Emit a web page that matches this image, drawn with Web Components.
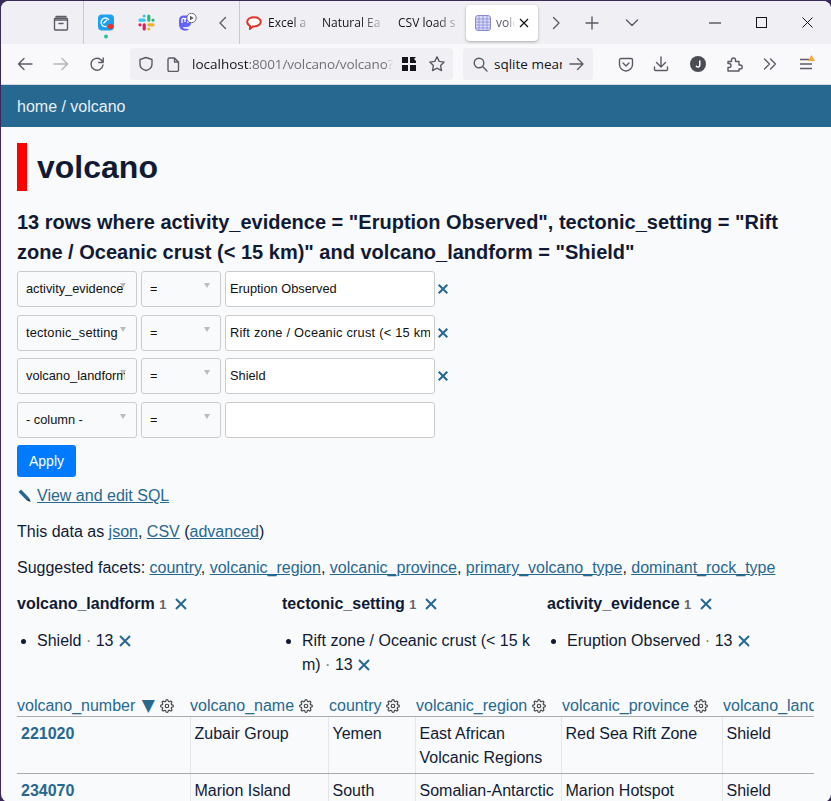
<!DOCTYPE html>
<html lang="en">
<head>
<meta charset="utf-8">
<title>volcano</title>
<style>
  html, body { margin: 0; height: 100%; overflow: hidden; background: #3a2a5c; }
  app-window { height: 801px; }
</style>
</head>
<body>
<app-window>
  <browser-chrome></browser-chrome>
  <site-header>home / volcano</site-header>
  <table-page></table-page>
</app-window>

<script>
const X_PATH = "M2 2l10 10M12 2L2 12";
const GEAR = `<svg width="14" height="14" viewBox="0 0 24 24" fill="none" stroke="#444" stroke-width="2" stroke-linecap="round" stroke-linejoin="round"><circle cx="12" cy="12" r="3"/><path d="M19.4 15a1.65 1.65 0 0 0 .33 1.82l.06.06a2 2 0 0 1 0 2.83 2 2 0 0 1-2.83 0l-.06-.06a1.65 1.65 0 0 0-1.82-.33 1.65 1.65 0 0 0-1 1.51V21a2 2 0 0 1-2 2 2 2 0 0 1-2-2v-.09A1.65 1.65 0 0 0 9 19.4a1.65 1.65 0 0 0-1.82.33l-.06.06a2 2 0 0 1-2.83 0 2 2 0 0 1 0-2.83l.06-.06a1.65 1.65 0 0 0 .33-1.82 1.65 1.65 0 0 0-1.51-1H3a2 2 0 0 1-2-2 2 2 0 0 1 2-2h.09A1.65 1.65 0 0 0 4.6 9a1.65 1.65 0 0 0-.33-1.82l-.06-.06a2 2 0 0 1 0-2.83 2 2 0 0 1 2.83 0l.06.06a1.65 1.65 0 0 0 1.82.33H9a1.65 1.65 0 0 0 1-1.51V3a2 2 0 0 1 2-2 2 2 0 0 1 2 2v.09a1.65 1.65 0 0 0 1 1.51 1.65 1.65 0 0 0 1.82-.33l.06-.06a2 2 0 0 1 2.83 0 2 2 0 0 1 0 2.83l-.06.06a1.65 1.65 0 0 0-.33 1.82V9a1.65 1.65 0 0 0 1.51 1H21a2 2 0 0 1 2 2 2 2 0 0 1-2 2h-.09a1.65 1.65 0 0 0-1.51 1z"/></svg>`;

class AppWindow extends HTMLElement {
  constructor() {
    super();
    this.attachShadow({ mode: "open" }).innerHTML = `
      <style>
        :host {
          display: flex; flex-direction: column;
          margin: 1px 0 0 1px;
          background: #f9fafb;
          border-radius: 8px;
          overflow: hidden;
          font-family: "Liberation Sans", Arial, sans-serif;
        }
      </style>
      <slot></slot>`;
  }
}

// toolbar button, fixed width slot with a centred icon
class FfBtn extends HTMLElement {
  constructor() {
    super();
    this.attachShadow({ mode: "open" }).innerHTML = `
      <style>
        :host { display: flex; flex: none; align-items: center; justify-content: center; height: 36px; width: 36px; }
        ::slotted(svg) { display: block; }
      </style>
      <slot></slot>`;
  }
}

class FfTab extends HTMLElement {
  constructor() {
    super();
    this.attachShadow({ mode: "open" }).innerHTML = `
      <style>
        :host {
          display: flex; flex: none; align-items: center; box-sizing: border-box;
          height: 36px; font: 12px "Open Sans", sans-serif; color: #15141a;
          white-space: nowrap;
        }
        :host([active]) {
          background: #fff; border-radius: 4px;
          box-shadow: 0 1px 3px rgba(0,0,0,.3);
          color: #5b5b66;
        }
        .label {
          overflow: hidden; flex: 1; min-width: 0;
          -webkit-mask-image: linear-gradient(to right, #000 60%, transparent);
          mask-image: linear-gradient(to right, #000 60%, transparent);
        }
        ::slotted(svg) { flex: none; display: block; }
      </style>
      <slot name="icon"></slot><span class="label"><slot></slot></span><slot name="end"></slot>`;
  }
}

class BrowserChrome extends HTMLElement {
  constructor() {
    super();
    const stroke = `fill="none" stroke="#5b5b66" stroke-width="1.4" stroke-linecap="round" stroke-linejoin="round"`;
    this.attachShadow({ mode: "open" }).innerHTML = `
      <style>
        :host { display: block; flex: none; }
        .tabs { display: flex; align-items: center; height: 43px; background: #f0f0f4; }
        .sep { flex: none; width: 1px; height: 43px; background: #c9c9cf; }
        .nav {
          display: flex; align-items: center; height: 40px; background: #f9f9fb;
          border-bottom: 1px solid #d8d8dc;
        }
        .field {
          display: flex; align-items: center; flex: none; height: 32px; background: #f0f0f4;
          border-radius: 4px; font: 13.5px "Open Sans", sans-serif; color: #15141a; white-space: nowrap;
        }
        .url { width: 323px; margin-left: 15px; }
        .search { width: 130px; margin-left: 10px; }
        .clip { overflow: hidden; }
        .url .clip {
          width: 201px; margin-left: 12px; margin-right: -1px;
          -webkit-mask-image: linear-gradient(to right, #000 96%, transparent);
          mask-image: linear-gradient(to right, #000 96%, transparent);
        }
        .search .clip { width: 68px; margin-left: 6px; }
        .dim { color: #70707a; letter-spacing: -.12px; }
        .end { margin-left: auto; }
      </style>
      <div class="tabs">
        <ff-btn style="margin-left:42px">
          <svg width="18" height="18" viewBox="0 0 18 18" ${stroke}><path d="M4 2.500h10M2.500 6h13v9a1 1 0 0 1-1 1h-11a1 1 0 0 1-1-1zM2.500 6V5.300a1 1 0 0 1 1-1h11a1 1 0 0 1 1 1V6M7 9.500h4"/></svg>
        </ff-btn>
        <span class="sep" style="margin-left:4px"></span>
        <ff-btn style="margin-left:4px">
          <svg width="18" height="32" viewBox="0 0 18 32"><rect x="1" y="7.500" width="16" height="16" rx="4" fill="#1ea0f1"/><path d="M11.500 12.400A4.300 4.300 0 1 0 9 19.600" fill="none" stroke="#fff" stroke-width="1.400" stroke-linecap="round"/><path d="M6.800 16l2.800-2.800" stroke="#fff" stroke-width="1.400" stroke-linecap="round"/><circle cx="13.500" cy="19.500" r="2.800" fill="#e8352c"/><circle cx="9" cy="29.500" r="2" fill="#2ac3a2"/></svg>
        </ff-btn>
        <ff-btn style="margin-left:4px">
          <svg width="17" height="17" viewBox="0 0 17 17" fill="none" stroke-width="3.200" stroke-linecap="round"><path d="M6.200 2v.01M2 6.200h4.200" stroke="#36c5f0"/><path d="M10.800 2v4.200M15 6.200v.01" stroke="#2eb67d"/><path d="M15 10.800h-4.200M10.800 15v.01" stroke="#ecb22e"/><path d="M6.200 15v-4.200M2 10.800v.01" stroke="#e01e5a"/></svg>
        </ff-btn>
        <ff-btn style="margin-left:5px">
          <svg width="20" height="20" viewBox="0 0 20 20"><path d="M2 7c0-3 2-4.500 4.500-4.500h3C12 2.500 14 4 14 7v3c0 2.500-2 4-4.500 4H6c0 1 1 1.800 3 1.800l3 .2c-1.500 2.500-10 3-10-5z" fill="#6364ff"/><path d="M5 10V6.800a1.500 1.500 0 0 1 3 0V9m0-2.200a1.500 1.500 0 0 1 3 0V10" fill="none" stroke="#fff" stroke-width="1.300"/><circle cx="14.500" cy="5" r="4.700" fill="#fff" stroke="#5b5b66" stroke-width=".9"/><path d="M13 2.800l3.700 2.200L13 7.200z" fill="#5b5b66"/></svg>
        </ff-btn>
        <ff-btn style="width:32px;margin-left:2px">
          <svg width="16" height="16" viewBox="0 0 16 16" ${stroke} style="margin-left:-1px"><path d="M10.500 2.500L5 8l5.500 5.500"/></svg>
        </ff-btn>
        <span class="sep"></span>
        <ff-tab style="width:70px;padding-left:6px">
          <svg slot="icon" width="16" height="14" viewBox="0 0 16 14" style="margin-right:6px"><path d="M8 1.200c3.800 0 6.800 2 6.800 4.600S11.800 10.400 8 10.400H6.800L4 12.800v-3C2.300 9 1.200 7.500 1.200 5.800 1.200 3.200 4.200 1.200 8 1.200z" fill="#fff" stroke="#e0342a" stroke-width="2"/></svg>
          Excel a
        </ff-tab>
        <ff-tab style="width:76px;padding-left:12px">Natural Ea</ff-tab>
        <ff-tab style="width:76px;padding-left:12px">CSV load s</ff-tab>
        <ff-tab active style="width:72px;margin-left:4px;padding:0 8px 0 9px">
          <svg slot="icon" width="16" height="16" viewBox="0 0 16 16" style="margin-right:5px"><rect x=".5" y=".5" width="15" height="15" rx="2.500" fill="#dcdcf6" stroke="#8a8ad8"/><path d="M.5 4h15M.5 7h15M.5 10h15M.5 13h15M4 .5v15M8 .5v15M12 .5v15" stroke="#8a8ad8" stroke-width=".8"/></svg>
          volc
          <svg slot="end" width="12" height="12" viewBox="0 0 12 12" fill="none" stroke="#15141a" stroke-width="1.200" style="margin-left:3px"><path d="M2 2l8 8M10 2l-8 8"/></svg>
        </ff-tab>
        <ff-btn>
          <svg width="16" height="16" viewBox="0 0 16 16" ${stroke}><path d="M5.500 2.500L11 8l-5.500 5.500"/></svg>
        </ff-btn>
        <ff-btn>
          <svg width="14" height="14" viewBox="0 0 14 14" ${stroke}><path d="M7 1v12M1 7h12"/></svg>
        </ff-btn>
        <ff-btn style="margin-left:4px">
          <svg width="14" height="10" viewBox="0 0 14 10" ${stroke}><path d="M1.500 2l5.500 5.500L12.500 2"/></svg>
        </ff-btn>
        <ff-btn class="end" style="width:46px">
          <svg width="12" height="2" viewBox="0 0 12 2"><path d="M0 1h12" stroke="#15141a"/></svg>
        </ff-btn>
        <ff-btn style="width:46px">
          <svg width="11" height="11" viewBox="0 0 11 11"><rect x=".5" y=".5" width="10" height="10" fill="none" stroke="#15141a"/></svg>
        </ff-btn>
        <ff-btn style="width:46px;margin-right:1px">
          <svg width="11" height="11" viewBox="0 0 11 11" fill="none" stroke="#15141a"><path d="M.5.500l10 10M10.500.500l-10 10"/></svg>
        </ff-btn>
      </div>
      <div class="nav">
        <ff-btn style="margin-left:6px">
          <svg width="16" height="14" viewBox="0 0 16 14" ${stroke}><path d="M15 7H1.500M7 1.500L1.500 7 7 12.500"/></svg>
        </ff-btn>
        <ff-btn>
          <svg width="16" height="14" viewBox="0 0 16 14" fill="none" stroke="#b4b4ba" stroke-width="1.400" stroke-linecap="round" stroke-linejoin="round"><path d="M1 7h13.500M9 1.500L14.500 7 9 12.500"/></svg>
        </ff-btn>
        <ff-btn>
          <svg width="16" height="16" viewBox="0 0 16 16" ${stroke}><path d="M13.800 6.500A6 6 0 1 0 14 9M14.200 2v4.500H9.800"/></svg>
        </ff-btn>
        <div class="field url">
          <svg width="16" height="16" viewBox="0 0 16 16" ${stroke} style="margin-left:8px"><path d="M8 1.500l6 2v4.700c0 3-2.500 5.300-6 6.300-3.500-1-6-3.300-6-6.300V3.500z"/></svg>
          <svg width="14" height="15" viewBox="0 0 14 15" ${stroke} style="margin-left:12px"><path d="M2 2.500a1.500 1.500 0 0 1 1.500-1.500h5L12.500 5v8a1.500 1.500 0 0 1-1.500 1.500H3.500A1.500 1.500 0 0 1 2 13zM8.500 1v4h4"/></svg>
          <span class="clip">localhost<span class="dim">:8001/volcano/volcano?_</span></span>
          <svg width="14" height="14" viewBox="0 0 14 14" fill="#15141a" style="margin-left:10px"><path d="M0 0h6v6H0zM8 8h6v6H8zM0 8h6v6H0zM8 0h6l-2 2 2 2v2H8z"/></svg>
          <svg width="18" height="18" viewBox="0 0 18 18" ${stroke} style="margin-left:12px"><path d="M9 1.800l2.200 4.600 5 .7-3.600 3.500.9 5L9 13.200l-4.500 2.400.9-5L1.800 7.100l5-.7z"/></svg>
        </div>
        <div class="field search">
          <svg width="15" height="15" viewBox="0 0 15 15" ${stroke} style="margin-left:10px"><circle cx="6" cy="6" r="4.800"/><path d="M9.600 9.600L14 14"/></svg>
          <span class="clip">sqlite mean</span>
          <svg width="15" height="14" viewBox="0 0 15 14" ${stroke} style="margin-left:7px"><path d="M1 7h13M8.500 1.500L14 7l-5.500 5.500"/></svg>
        </div>
        <ff-btn style="margin-left:15px">
          <svg width="16" height="15" viewBox="0 0 16 15" ${stroke}><path d="M1.500 3a1.500 1.500 0 0 1 1.500-1.500h10A1.500 1.500 0 0 1 14.500 3v4.500a6.500 6.500 0 0 1-13 0zM5 6l3 3 3-3"/></svg>
        </ff-btn>
        <ff-btn style="margin-left:-1px">
          <svg width="16" height="16" viewBox="0 0 16 16" ${stroke}><path d="M8 1v9.500M3.500 6.500L8 11l4.500-4.500M1.500 11v2.500a1 1 0 0 0 1 1h11a1 1 0 0 0 1-1V11"/></svg>
        </ff-btn>
        <ff-btn style="margin-left:1px">
          <svg width="16" height="16" viewBox="0 0 16 16" role="img" aria-label="J"><circle cx="8" cy="8" r="8" fill="#4c4c55"/><path d="M9.800 4.500v4.700a1.900 1.900 0 0 1-3.700.6" fill="none" stroke="#fff" stroke-width="1.500"/></svg>
        </ff-btn>
        <ff-btn style="margin-left:1px">
          <svg width="16" height="16" viewBox="0 0 16 16" ${stroke}><path d="M1 5.500h3.500V4a2 2 0 0 1 4 0v1.500H12V9h1.200a2 2 0 0 1 0 4H12v2H1v-3.500h1a2 2 0 0 0 0-4H1z"/></svg>
        </ff-btn>
        <ff-btn style="margin-left:-1px">
          <svg width="14" height="12" viewBox="0 0 14 12" ${stroke}><path d="M1.500 1L6.500 6l-5 5M7.500 1l5 5-5 5"/></svg>
        </ff-btn>
        <ff-btn>
          <svg width="18" height="18" viewBox="0 0 18 18"><path d="M3 4.500h9M3 9h12M3 13.500h12" stroke="#5b5b66" stroke-width="1.300"/><path d="M14.500 0l3.500 6h-7z" fill="#ffa436"/></svg>
        </ff-btn>
      </div>`;
  }
}

class SiteHeader extends HTMLElement {
  constructor() {
    super();
    this.attachShadow({ mode: "open" }).innerHTML = `
      <style>
        :host {
          display: flex; align-items: center; flex: none; box-sizing: border-box;
          height: 42px; padding: 1px 16px 0;
          background: #276890; color: #e8f0f5; font-size: 16px;
        }
      </style>
      <slot></slot>`;
  }
}

const FIELD_CSS = `
  .box {
    box-sizing: border-box; height: 36px; border: 1px solid #ccc; border-radius: 3px;
    font-size: 12.8px; color: #111; white-space: nowrap; position: relative;
    display: flex; align-items: center;
  }
  .box span { display: block; overflow: hidden; min-width: 0; }
  .sel { background: #f9fafb; padding-left: 8px; padding-right: 11px; }
  .sel::after {
    content: ""; position: absolute; right: 10px; top: 11px;
    border: 3px solid transparent; border-top: 5px solid #bbb; border-bottom: 0;
  }
  .val { background: #fff; padding: 0 4px; }
  .col-text { letter-spacing: var(--column-spacing, 0); }
  .val-text { letter-spacing: var(--value-spacing, 0); }
`;

class FilterRow extends HTMLElement {
  constructor() {
    super();
    const column = this.getAttribute("column");
    const value = this.getAttribute("value") || "";
    const removable = this.hasAttribute("removable");
    this.attachShadow({ mode: "open" }).innerHTML = `
      <style>
        :host { display: grid; grid-template-columns: 120px 80px 210px 16px; gap: 4px; align-items: center; }
        ${FIELD_CSS}
        svg { display: block; margin-left: -2px; }
      </style>
      <div class="box sel"><span class="col-text">${column}</span></div>
      <div class="box sel"><span>=</span></div>
      <div class="box val"><span class="val-text">${value}</span></div>
      ${removable ? `<svg width="12" height="12" viewBox="0 0 14 14" fill="none" stroke="#276890" stroke-width="2.400"><path d="${X_PATH}"/></svg>` : ""}`;
  }
}

class FacetColumn extends HTMLElement {
  constructor() {
    super();
    const x = `<svg class="x" width="14" height="14" viewBox="0 0 14 14" fill="none" stroke="#276890" stroke-width="2"><path d="${X_PATH}"/></svg>`;
    this.attachShadow({ mode: "open" }).innerHTML = `
      <style>
        :host { display: block; font-size: 16px; line-height: 24px; color: #111a35; min-width: 0; }
        .title { font-weight: 700; white-space: nowrap; }
        .n { font-size: 12.8px; color: #666; }
        .dot { color: #777; }
        ul { margin: 12px 0 0; padding-left: 20px; width: 230px; word-break: break-all; }
        .x { vertical-align: -2px; }
        .title .x { margin-left: 3px; }
      </style>
      <div class="title">${this.getAttribute("name")} <span class="n">1</span> ${x}</div>
      <ul><li>${this.getAttribute("value")} <span class="dot">·</span> 13 ${x}</li></ul>`;
  }
}

class DataTable extends HTMLElement {
  constructor() {
    super();
    const cols = [
      ["volcano_number", 173], ["volcano_name", 138], ["country", 87],
      ["volcanic_region", 146], ["volcanic_province", 161], ["volcano_landform", 160],
    ];
    const rows = [
      ["221020", "Zubair Group", "Yemen", "East African Volcanic Regions", "Red Sea Rift Zone", "Shield"],
      ["234070", "Marion Island", "South Africa", "Somalian-Antarctic", "Marion Hotspot", "Shield"],
    ];
    this.attachShadow({ mode: "open" }).innerHTML = `
      <style>
        :host { display: block; overflow: hidden; font-size: 16px; line-height: 24px; color: #111a35; }
        table { border-collapse: collapse; table-layout: fixed; width: 865px; }
        a { color: #276890; text-decoration: none; }
        th { font-weight: 400; text-align: left; padding: 2px 0 0; line-height: 21px; border-bottom: 1px solid #aaa; white-space: nowrap; overflow: hidden; }
        th:nth-child(n+3) { padding-left: 1px; }
        th .tri { color: #276890; font: 17px/0 "DejaVu Sans", sans-serif; margin: 0 1px 0 2px; }
        th svg { vertical-align: -2px; }
        td { padding: 5px 4px 3px; vertical-align: top; border-right: 1px solid #e4e6ea; border-bottom: 1px solid #aaa; }
        td:first-child a { font-weight: 700; }
        tr > :last-child { border-right: 0; }
      </style>
      <table>
        <colgroup>${cols.map(([, w]) => `<col style="width:${w}px">`).join("")}</colgroup>
        <thead><tr>${cols.map(([name], i) =>
          `<th><a>${name}</a>${i === 0 ? ' <span class="tri">▼</span>' : ""}${i < 5 ? " " + GEAR : ""}</th>`).join("")}</tr></thead>
        <tbody>${rows.map((r) =>
          `<tr>${r.map((c, i) => `<td>${i === 0 ? `<a>${c}</a>` : c}</td>`).join("")}</tr>`).join("")}</tbody>
      </table>`;
  }
}

class TablePage extends HTMLElement {
  constructor() {
    super();
    this.attachShadow({ mode: "open" }).innerHTML = `
      <style>
        :host {
          display: block; flex: 1; min-height: 0; overflow: hidden; padding: 16px 16px 0;
          font-size: 16px; line-height: 24px; color: #111a35;
        }
        a { color: #276890; text-decoration: underline; }
        h1 {
          margin: 0; height: 48px; line-height: 48px; padding-left: 10px;
          border-left: 10px solid red; font-size: 32px; font-weight: 700;
        }
        h3 { margin: 16px 0 0; font-size: 20px; line-height: 30px; font-weight: 700; }
        .filters { display: grid; row-gap: 7.67px; margin-top: 4px; }
        .apply {
          display: block; width: 59px; height: 32px; margin-top: 7px; border: 0; border-radius: 3px;
          background: #007bff; color: #fff; font: 14px "Liberation Sans", Arial, sans-serif; padding: 0;
        }
        p { margin: 0; }
        .sql { margin-top: 7px; display: flex; align-items: center; gap: 5px; padding-left: 1px; }
        .line { margin-top: 12px; }
        .facets { display: grid; grid-template-columns: repeat(3, 265px); margin-top: 12px; }
        data-table { margin-top: 16px; width: 797px; }
      </style>
      <h1>volcano</h1>
      <h3>13 rows where activity_evidence = "Eruption Observed", tectonic_setting = "Rift zone / Oceanic crust (&lt; 15 km)" and volcano_landform = "Shield"</h3>
      <div class="filters">
        <filter-row removable column="activity_evidence" value="Eruption Observed"></filter-row>
        <filter-row removable column="tectonic_setting" value="Rift zone / Oceanic crust (&lt; 15 km)" style="--column-spacing:.18px;--value-spacing:.24px"></filter-row>
        <filter-row removable column="volcano_landform" value="Shield"></filter-row>
        <filter-row column="- column -"></filter-row>
      </div>
      <button class="apply">Apply</button>
      <p class="sql">
        <svg width="14" height="14" viewBox="0 0 14 14"><path d="M.5 3L3 .5l8 8.200-2.500 2.500z" fill="#276890"/><path d="M8.500 11.200L11 8.700l1.800 4.300z" fill="#0e3a5a"/></svg>
        <a>View and edit SQL</a>
      </p>
      <p class="line">This data as <a>json</a>, <a>CSV</a> (<a>advanced</a>)</p>
      <p class="line">Suggested facets: <a>country</a>, <a>volcanic_region</a>, <a>volcanic_province</a>, <a>primary_volcano_type</a>, <a>dominant_rock_type</a></p>
      <div class="facets">
        <facet-column name="volcano_landform" value="Shield"></facet-column>
        <facet-column name="tectonic_setting" value="Rift zone / Oceanic crust (&lt; 15 km)"></facet-column>
        <facet-column name="activity_evidence" value="Eruption Observed"></facet-column>
      </div>
      <data-table></data-table>`;
  }
}

customElements.define("app-window", AppWindow);
customElements.define("ff-btn", FfBtn);
customElements.define("ff-tab", FfTab);
customElements.define("browser-chrome", BrowserChrome);
customElements.define("site-header", SiteHeader);
customElements.define("filter-row", FilterRow);
customElements.define("facet-column", FacetColumn);
customElements.define("data-table", DataTable);
customElements.define("table-page", TablePage);
</script>
</body>
</html>
